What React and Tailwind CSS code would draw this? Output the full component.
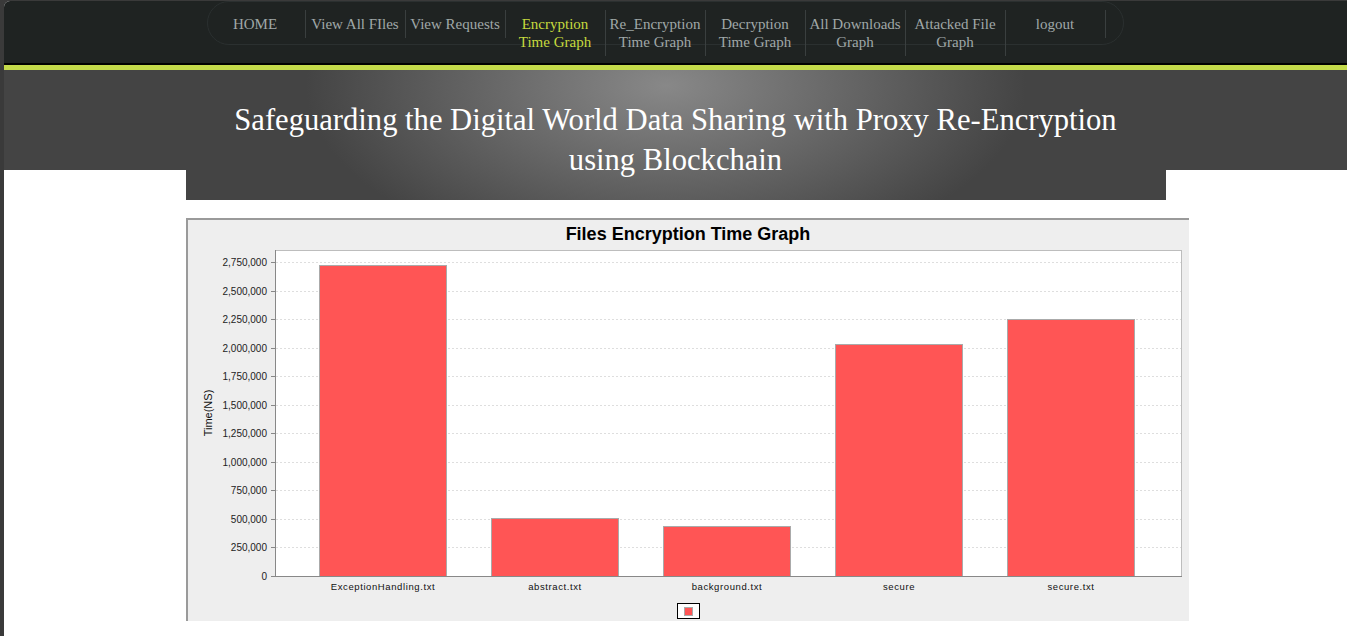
import React from "react";

const NAV = [
  ["HOME"],
  ["View All FIles"],
  ["View Requests"],
  ["Encryption", "Time Graph"],
  ["Re_Encryption", "Time Graph"],
  ["Decryption", "Time Graph"],
  ["All Downloads", "Graph"],
  ["Attacked File", "Graph"],
  ["logout"],
];

const MAX = 2750000;
const Y0 = 328;
const Y1 = 14;
const yOf = (v) => Y0 - ((Y0 - Y1) * v) / MAX;

const BARS = [
  ["ExceptionHandling.txt", 2723000],
  ["abstract.txt", 505000],
  ["background.txt", 435000],
  ["secure", 2030000],
  ["secure.txt", 2250000],
];

function Chart() {
  const ticks = [];
  for (let i = 0; i <= 11; i++) ticks.push(i * 250000);
  return (
    <svg width="1001" height="373" className="block" style={{ fontFamily: '"Liberation Sans", Arial, sans-serif' }}>
      <rect x="87.5" y="2.5" width="906" height="326" fill="#ffffff" stroke="#bdbdbd" strokeWidth="1" />
      {ticks.map((t) => (
        <g key={t}>
          {t > 0 && (
            <line x1="88" x2="993" y1={Math.round(yOf(t)) + 0.5} y2={Math.round(yOf(t)) + 0.5} stroke="#dedede" strokeWidth="1" strokeDasharray="2 2" />
          )}
          <line x1="83" x2="87" y1={Math.round(yOf(t)) + 0.5} y2={Math.round(yOf(t)) + 0.5} stroke="#888" strokeWidth="1" />
          <text x="79" y={Math.round(yOf(t)) + 4} fontSize="10" textAnchor="end" fill="#222">
            {t.toLocaleString("en-US")}
          </text>
        </g>
      ))}
      {BARS.map(([name, v], i) => {
        const x = 131 + i * 172;
        const top = Math.round(yOf(v));
        return (
          <g key={name}>
            <rect x={x + 0.5} y={top + 0.5} width="127" height={Y0 - top} fill="#ff5555" stroke="#aaaaaa" strokeWidth="1" />
            <text x={x + 64} y="342" fontSize="9.5" textAnchor="middle" fill="#111" letterSpacing="0.6">
              {name}
            </text>
          </g>
        );
      })}
      <line x1="87.5" x2="87.5" y1="2" y2="329" stroke="#888" strokeWidth="1" />
      <line x1="87" x2="994" y1="328.5" y2="328.5" stroke="#888" strokeWidth="1" />
      <text x="0" y="0" fontSize="11" textAnchor="middle" fill="#111" transform="translate(24 165) rotate(-90)">
        Time(NS)
      </text>
      <rect x="489.5" y="355.5" width="22" height="15" fill="#ffffff" stroke="#000" strokeWidth="1" />
      <rect x="496.5" y="359.5" width="8" height="8" fill="#ff5555" stroke="#aaaaaa" strokeWidth="1" />
    </svg>
  );
}

export default function App() {
  return (
    <div className="min-h-screen bg-[#3a3a3a] pl-[4px] pt-[1px]" style={{ fontFamily: '"Liberation Serif", Georgia, serif' }}>
      <div className="min-h-[635px] bg-white rounded-tl-[6px] overflow-hidden">
        <div className="h-[64px] bg-[#1f2322] border-b-2 border-black">
          <div className="w-[980px] mx-auto">
            <div className="ml-[21px] w-[917px] h-[44px] rounded-[22px] border border-[#2b3030] pt-[8px]">
              <ul className="flex items-start -ml-[2px]">
                {NAV.map((lines, i) => (
                  <li
                    key={i}
                    className={
                      "w-[100px] border-r border-[#3a3f3f] py-[5px] text-center text-[15px] leading-[18px] " +
                      (i === 3 ? "text-[#c6da3e]" : "text-[#a0a8a8]")
                    }
                  >
                    {lines.map((l) => (
                      <div key={l} className="whitespace-nowrap">{l}</div>
                    ))}
                  </li>
                ))}
              </ul>
            </div>
          </div>
        </div>
        <div className="h-[5px] bg-[#c3d94a]" />
        <div className="bg-[linear-gradient(to_bottom,#444444_0,#444444_100px,#ffffff_100px)]">
          <div className="w-[980px] h-[130px] mx-auto bg-[radial-gradient(ellipse_360px_180px_at_49%_12%,#888888,#444444)] pt-[30px]">
            <h1 className="text-white text-center text-[30.6px] leading-[40px] font-normal">
              Safeguarding the Digital World Data Sharing with Proxy Re-Encryption
              <br />
              using Blockchain
            </h1>
          </div>
        </div>
        <div className="w-[980px] mx-auto pt-[18px]">
          <div className="w-[1003px] bg-[#eeeeee] border-t-2 border-l-2 border-[#9a9a9a]">
            <div className="h-[28px] text-center text-[18px] leading-[28px] font-bold text-black" style={{ fontFamily: '"Liberation Sans", Arial, sans-serif' }}>
              Files Encryption Time Graph
            </div>
            <Chart />
          </div>
        </div>
      </div>
    </div>
  );
}
